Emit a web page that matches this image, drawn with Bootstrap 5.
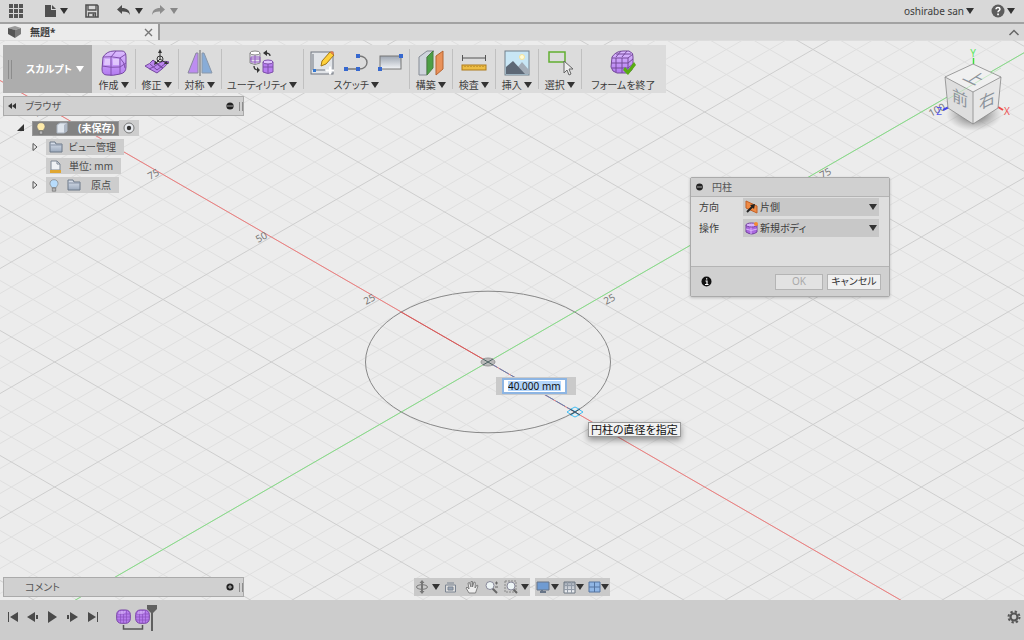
<!DOCTYPE html>
<html lang="ja">
<head>
<meta charset="utf-8">
<meta name="viewport" content="width=device-width, initial-scale=1">
<title>無題*</title>
<link href="https://cdn.jsdelivr.net/npm/bootstrap@5.3.0/dist/css/bootstrap.min.css" rel="stylesheet">
<style>
body{font-family:"Noto Sans","Noto Sans CJK JP",sans-serif;font-size:10px;line-height:14px;color:#3c3c3c;font-feature-settings:"palt";background:#ececec}
button,input,select{font-feature-settings:inherit}
svg{display:block;flex:none}
.bare{border:0;background:none;padding:0;color:inherit;display:flex;align-items:center}
.caret{width:0;height:0;border:4px solid transparent;border-top:6px solid #333;border-bottom:0;flex:none}
.caret.dim{border-top-color:#888}
.tight{gap:2px}
.appbar{height:24px;background:#d8d8d8;border-bottom:2px solid #a2a2a2;padding:0 9px 0 8px}
.filebtn{padding-left:4px}
.tabs{height:17px;background:#d8d8d8;border-bottom:1px solid #ddd}
.doc{width:160px;background:#ebebeb;border-right:2px solid #999;padding:0 5px 0 7px}
.stage{min-height:0;margin-top:-1px}
.tools{left:3px;top:5px;height:48px;background:#dcdcdc}
.space{width:89px;background:#adadad;color:#fff;font-weight:700;padding-left:5px}
.space span{margin:0 4px 0 14px}
.space .caret{border-top-color:#fff}
.grip{width:4px;height:19px;border:solid #8c8c8c;border-width:0 1px}
.grip.short{height:9px}
.tool{min-width:43px;padding:4px 6px 0;position:relative;flex-direction:column}
.tool+.tool::before{content:"";position:absolute;left:0;top:4px;bottom:4px;width:1px;background:#c0c0c0}
.tool .pics{height:29px}
.tool.finish{padding-left:10px;padding-right:10px}
.panel{left:3px;width:241px;height:20px;background:#d0d0d0;border:1px solid #aaa;padding:0 0 0 4px;color:#555}
.browse{top:56px}
.browse span{padding-left:8px}
.comments{bottom:3px}
.comments span{padding-left:17px}
.tree{left:0;top:80px}
.node{height:16px;margin-bottom:3px;padding-left:31px}
.node.root{padding-left:16px}
.node.leaf{padding-left:46px}
.node .box{background:#cdcdcd;height:16px;padding:0 8px 0 3px;color:#4a4a4a}
.node .sel{background:#828282;color:#fff;font-weight:700;height:15px;border:1px solid #999;padding-right:3px}
.node .part{margin:0 10px}
.node .pin{padding:0 4px}
.w-a{width:78px}.w-b{width:75px}.w-c{width:73px}
.dlg{right:134px;top:137px;width:200px;height:120px;background:#dedede;border:1px solid #aaa;border-radius:2px;box-shadow:0 1px 3px #0003}
.dlg .head{height:19px;background:#d0d0d0;border-bottom:1px solid #b4b4b4;padding-left:5px;gap:9px;color:#555}
.dlg .fields{padding-top:1px}
.dlg .foot{height:30px;background:#d0d0d0;border-top:1px solid #b4b4b4;padding:0 8px 0 10px}
.field{height:18px;margin-bottom:3px;padding:0 10px 0 8px}
.field label{width:44px}
.pick{background:#c8c8c8;padding:0 2px}
.pick select{appearance:none;border:0;background:none;color:inherit;font-size:10px;padding:0 0 0 2px;min-width:0}
.act{height:16px;border:1px solid #b4b4b4;background:#f0f0f0;color:#333;padding:0;font-size:10px;line-height:13px;width:54px}
.act:disabled{background:#e2e2e2;color:#aaa;width:48px}
.dim-in{left:calc(50% - 16px);top:calc(50% + 57px);width:80px;height:18px;background:#cacaca;padding:0 9px 0 6px}
.dim-in .ring{background:#fff;border:2px solid #8db5e3;padding:0 4px;height:16px}
.dim-in input{border:0;padding:0;width:100%;height:10px;font-size:10px;line-height:10px;background:#b2d5fb;color:#111;outline:0}
.tip{left:calc(50% + 76px);top:calc(50% + 102px);height:15px;border:1px solid #999;background:#f2f2f2;color:#111;font-size:11px;line-height:13px;padding:0 2px;box-shadow:0 3px 6px #0006;white-space:nowrap}
.cube{right:0;top:5px}
.navs{left:0;right:0;bottom:4px;gap:5px}
.navs>div{background:#c9c9c9;height:18px;padding:0 1px}
.time{height:40px;background:#ccc;padding:0 3px 6px 6px}
.steps{gap:6px}
.track{margin:4px 0 0 13px}
.axis{font-size:10px;fill:#777}
</style>
</head>
<body class="vh-100 d-flex flex-column overflow-hidden">
<svg width="0" height="0" class="position-absolute" aria-hidden="true">
<defs>
<linearGradient id="vi" x1="0" y1="0" x2="0" y2="1"><stop offset="0" stop-color="#dcbcff"/><stop offset="1" stop-color="#b27af0"/></linearGradient>
<linearGradient id="gr" x1="0" y1="0" x2="0" y2="1"><stop offset="0" stop-color="#9fa7b2"/><stop offset="1" stop-color="#f2f4f7"/></linearGradient>
<linearGradient id="fo" x1="0" y1="0" x2="0" y2="1"><stop offset="0" stop-color="#dde3ee"/><stop offset="1" stop-color="#9caabd"/></linearGradient>
<symbol id="folder" viewBox="0 0 14 12"><path d="M1 2V1h5l1 2h6v8H1z" fill="url(#fo)" stroke="#6c7888"/><path d="M1.500 4H13" stroke="#8793a5"/></symbol>
<symbol id="bulb" viewBox="0 0 10 13"><path d="M5 .7C2.500.7 1 2.400 1 4.400c0 1.500 1 2.300 1.800 4.200h4.400C8 6.700 9 5.900 9 4.400 9 2.400 7.500.7 5 .7z" stroke="#777" stroke-width=".6"/><path d="M3.300 9h3.400v3.200H3.300z" fill="#b5b5b5" stroke="#666" stroke-width=".6"/></symbol>
<symbol id="ball" viewBox="0 0 15 15"><rect x=".7" y="1" width="13.600" height="13.300" rx="4.500" fill="#b67ceb" stroke="#7740a6"/><path d="M1 5h13M1 8h13M1 11h13M4.500 1v13M7.500 1v13M10.500 1v13" stroke="#8b52bd" stroke-width=".7" fill="none"/><path d="M4 2h6L8 5H2z" fill="#e3c8ff" opacity=".5"/></symbol>
</defs>
</svg>

<header class="appbar d-flex align-items-center flex-shrink-0">
 <button class="bare" aria-label="データパネル"><svg width="16" height="14" fill="#555"><path d="M1 0h4v4H1zm5 0h4v4H6zm5 0h4v4h-4zM1 5h4v4H1zm5 0h4v4H6zm5 0h4v4h-4zM1 10h4v4H1zm5 0h4v4H6zm5 0h4v4h-4z"/></svg></button>
 <button class="bare filebtn gap-1 ms-3" aria-label="ファイル"><svg width="12" height="14" fill="#505050"><path d="M1 1h6v5h5v7H1z"/><path d="M8 1l4 4H8z"/></svg><i class="caret"></i></button>
 <button class="bare ms-3" aria-label="保存"><svg width="16" height="14" fill="none" stroke="#505050"><path d="M2 1h11l1 1v11H2z" stroke-width="1.600"/><path d="M4 1v5h8V1M4.500 13V9h7v4" stroke-width="1.300"/><path d="M9 10h1v2H9z" fill="#505050"/></svg></button>
 <button class="bare gap-1 ms-3" aria-label="元に戻す"><svg width="15" height="12"><path d="M1 4.500L6 0v3c5 0 7.500 2 8 7-1.500-2.700-3.500-3.500-8-3.400V9z" fill="#4d4d4d"/></svg><i class="caret"></i></button>
 <button class="bare gap-1 ms-2" aria-label="やり直し"><svg width="15" height="12"><path d="M14 4.500L9 0v3C4 3 1.500 5 1 10c1.500-2.700 3.500-3.500 8-3.400V9z" fill="#8e8e8e"/></svg><i class="caret dim"></i></button>
 <button class="bare tight ms-auto">oshirabe san <i class="caret"></i></button>
 <button class="bare tight ms-3" aria-label="ヘルプ"><svg width="15" height="14"><circle cx="8" cy="7" r="6.500" fill="#5c5c5c"/><path d="M6 5.300Q6.100 3.500 8 3.500t2 1.600Q10 6.200 8.900 6.700 8 7.200 8 8.200" stroke="#fff" stroke-width="1.500" fill="none"/><path d="M7.200 9.500h1.700v1.700H7.200z" fill="#fff"/></svg><i class="caret"></i></button>
</header>

<div class="tabs d-flex flex-shrink-0">
 <div class="doc d-flex align-items-center"><svg width="15" height="14"><path d="M1 3l7-2 6 2-6 2z" fill="#999"/><path d="M1 3l7 2v8l-7-4z" fill="#555"/><path d="M8 5l6-2v6l-6 4z" fill="#7a7a7a"/></svg><b class="ps-1 ms-1 me-auto">無題*</b><button class="bare" aria-label="閉じる"><svg width="9" height="9"><path d="M1 1l7 7M8 1L1 8" stroke="#777" stroke-width="1.400"/></svg></button></div>
 <button class="bare ms-auto me-1" aria-label="折りたたむ"><svg width="12" height="9"><path d="M1.500 7L6 2.500 10.500 7" fill="none" stroke="#666" stroke-width="1.500"/></svg></button>
</div>

<main class="stage position-relative flex-grow-1 overflow-hidden">
 <svg class="position-absolute top-0 start-0 w-100 h-100" aria-hidden="true"><svg x="50%" y="50%" overflow="visible"><g transform="translate(-24 42)" fill="none">
  <path id="minor" stroke="#dfdfdf"/><path id="major" stroke="#cecece"/>
  <path d="M-1560 -900L1560 900" stroke="#f07d7d"/><path d="M-1560 900L1560 -900" stroke="#86df86"/>
  <ellipse rx="122.500" ry="70.800" stroke="#888"/>
  <path d="M-87-50L0 0" stroke="#d45b5b"/><path d="M0 0l87 50" stroke="#5b83b5" stroke-dasharray="11 2"/>
  <ellipse rx="7" ry="4" fill="#b9b9b9" stroke="#999"/><path d="M-5-3L5 3M-5 3L5-3" stroke="#4d6262"/>
  <path d="M79 50l4-2.500M95 50l-4-2.500M79 50l4 2.500M95 50l-4 2.500M83 47l4-2 4 2-4 2.500zM83 53l4 2 4-2-4-2.500z" stroke="#43bdf2"/><path d="M82 47l10 6M82 53l10-6" stroke="#405363"/>
  <g class="axis"><text transform="translate(-122 -57) rotate(-28)">25</text><text transform="translate(-230 -119) rotate(-28)">50</text><text transform="translate(-338 -182) rotate(-28)">75</text><text transform="translate(-453 -244) rotate(-28)">100</text><text transform="translate(118 -57) rotate(-28)">25</text><text transform="translate(334 -183) rotate(-28)">75</text><text transform="translate(443 -245) rotate(-28)">100</text></g>
 </g></svg></svg>

 <div class="tools position-absolute d-flex">
  <button class="bare space"><i class="grip"></i><span>スカルプト</span><i class="caret"></i></button>
  <button class="bare tool"><span class="pics"><svg width="28" height="28"><path d="M3 8Q7 2 14 2h8q4 0 4 6v10q0 6-6 7-7 2-13 1-5 0-5-6z" fill="url(#vi)" stroke="#7548a0"/><path d="M3 8q8-1 17 1l6-4M20 9v16M11 8v19M2 17q9 2 18 1l6-4M11 8l5-6M20 9q5 5 5 10" fill="none" stroke="#8050ad"/><path d="M5 10h5v6H4zM13 10h6v6h-6z" fill="#ecdcff" opacity=".65"/></svg></span><span class="d-flex align-items-center tight">作成<i class="caret"></i></span></button>
  <button class="bare tool"><span class="pics"><svg width="28" height="28"><path d="M2 17q5-2 8-6l5 4q4-4 11-2-5 6-12 11Q8 21 2 17z" fill="#bb87ef" stroke="#75489f"/><path d="M6 20q5-2 9-5l5 4M10 11q3 4 9 8M7 15l7 6 9-7" fill="none" stroke="#75489f"/><path d="M17 10V3M17 10l-4 4M17 10l6 4" stroke="#333"/><circle cx="17" cy="10" r="3" fill="none" stroke="#333"/><path d="M15 4l2-4 2 4zM12 12l-1 4 4-2zM23 12l3 3h-5z" fill="#333"/></svg></span><span class="d-flex align-items-center tight">修正<i class="caret"></i></span></button>
  <button class="bare tool"><span class="pics"><svg width="28" height="28"><path d="M12 4v20H2L10 4z" fill="#bd8df1" stroke="#8a8a9d"/><path d="M16 4v20h10L18 4z" fill="#88acd7" stroke="#8a98aa"/><path d="M14 1v26" stroke="#666"/></svg></span><span class="d-flex align-items-center tight">対称<i class="caret"></i></span></button>
  <button class="bare tool"><span class="pics"><svg width="28" height="28"><path d="M2 4v10q5 3 10 0V4z" fill="#e3e3eb" stroke="#888"/><path d="M3 8h9v5H3zM7 5v10M2 10h10" fill="none" stroke="#935bc3"/><ellipse cx="7" cy="4" rx="5" ry="2" fill="#fff" stroke="#888"/><path d="M15 13v10q5 3 10 0V13z" fill="#b77df0" stroke="#7d50a8"/><path d="M20 15v9M15 18h10" stroke="#7d50a8"/><ellipse cx="20" cy="13" rx="5" ry="2" fill="#e1c5ff" stroke="#7d50a8"/><path d="M22 7q0-3-5-3M6 17q0 4 4 4" fill="none" stroke="#333" stroke-width="1.300"/><path d="M15 4l4-3v6zM12 21l-3-3v6z" fill="#333"/></svg></span><span class="d-flex align-items-center tight">ユーティリティ<i class="caret"></i></span></button>
  <button class="bare tool"><span class="pics d-flex gap-2"><svg width="26" height="28"><rect x="2" y="3" width="22" height="22" fill="#e1e4e8" stroke="#707780"/><path d="M4 5v16h12" fill="none" stroke="#707780"/><path d="M13 12L21 3l4 3-8 9-5 2z" fill="#ffd13b" stroke="#a07619"/><path d="M21 3l2-1 2 2-1 2z" fill="#e27e4c"/><path d="M17 21.500h8M21 17.500v8" stroke="#fff" stroke-width="2"/><path d="M4 20h3v3H4z" fill="#3478d2"/></svg><svg width="26" height="28"><path d="M3 20h12c12 1 12-14 0-13" fill="none" stroke="#777" stroke-width="1.400"/><path d="M1 18h4v4H1zm12 0h4v4h-4zM13 5h4v4h-4z" fill="#3668cf"/></svg><svg width="26" height="28"><rect x="3" y="7" width="21" height="13" fill="url(#gr)" stroke="#777"/><path d="M22 5h4v4h-4zM1 18h4v4H1z" fill="#3668cf"/></svg></span><span class="d-flex align-items-center tight">スケッチ<i class="caret"></i></span></button>
  <button class="bare tool"><span class="pics"><svg width="28" height="28"><path d="M2 8l8-6h7L10 8v18H2z" fill="#cfd4dc" stroke="#858b94"/><path d="M10 8l6-6v17l-6 7z" fill="#4c9f45" stroke="#487e41"/><path d="M19 7l7-5v18l-7 6z" fill="#e99159" stroke="#b66432"/></svg></span><span class="d-flex align-items-center tight">構築<i class="caret"></i></span></button>
  <button class="bare tool"><span class="pics"><svg width="28" height="28"><path d="M2.500 6v6M25.500 6v6M3 9h22" stroke="#555"/><rect x="2" y="16" width="24" height="5" fill="#edbd45" stroke="#ad7b1d"/><path d="M5 17v1m3-1v1m3-1v1m3-1v1m3-1v1m3-1v1m3-1v1" stroke="#a67b20"/></svg></span><span class="d-flex align-items-center tight">検査<i class="caret"></i></span></button>
  <button class="bare tool"><span class="pics"><svg width="28" height="28"><rect x="2" y="2" width="24" height="24" fill="#c8e6f5" stroke="#72808b"/><circle cx="19" cy="8" r="2.500" fill="#fffbd7" stroke="#f4e39c"/><path d="M10 24l9-11 7 8v4H10z" fill="#a3adb8"/><path d="M3 18l7-6 12 13H3z" fill="#5d6876"/></svg></span><span class="d-flex align-items-center tight">挿入<i class="caret"></i></span></button>
  <button class="bare tool"><span class="pics"><svg width="28" height="28"><rect x="3" y="3" width="16" height="10" fill="none" stroke="#61ae31" stroke-width="1.500"/><path d="M18 12v12l3-3 2 5 2-1-2-5h4z" fill="#eee" stroke="#666"/></svg></span><span class="d-flex align-items-center tight">選択<i class="caret"></i></span></button>
  <button class="bare tool finish"><span class="pics"><svg width="28" height="28"><path d="M3 8Q7 2 14 2h6q5 2 4 6v10q0 4-6 6H8q-5-1-6-6z" fill="url(#vi)" stroke="#744a99"/><path d="M3 9h16l5-4M2 14h17l5-4M3 19h16l5-4M7 5h15M7 9v14M13 9v15M19 9v14M7 8l5-6M13 8l5-6" fill="none" stroke="#744a99"/><path d="M14 21l2-3 3 3 6-8 2 3-8 10z" fill="#58ac13"/></svg></span><span>フォームを終了</span></button>
 </div>

 <div class="panel browse position-absolute d-flex align-items-center"><svg width="9" height="8"><path d="M4 1v6L0 4zM8 1v6L4 4z" fill="#333"/></svg><span class="me-auto">ブラウザ</span><svg width="10" height="10"><circle cx="5" cy="5" r="3.600" fill="#222"/><path d="M2 5h6" stroke="#aaa"/></svg><i class="grip short ms-1"></i></div>
 <div class="tree position-absolute">
  <div class="node root d-flex align-items-center"><svg width="16" height="10"><path d="M8 1v7H1z" fill="#333"/></svg><div class="box sel d-flex align-items-center"><svg width="10" height="13" fill="#ffebaa"><use href="#bulb"/></svg><svg class="part" width="12" height="12"><path d="M1 3l3-2h7v8l-3 2H1z" fill="#dfe5ed" stroke="#aab3bf"/><path d="M8 3v8l3-2V1z" fill="#aeb7c4"/></svg><span>(未保存)</span></div><label class="box pin d-flex align-items-center"><svg width="12" height="12"><circle cx="6" cy="6" r="5" fill="#e7eaee" stroke="#777"/><circle cx="6" cy="6" r="2.200" fill="#333"/></svg><input type="radio" checked class="visually-hidden" aria-label="アクティブ"></label></div>
  <div class="node d-flex align-items-center"><svg width="15" height="10"><path d="M2 1.500v7L6 5z" fill="none" stroke="#555"/></svg><div class="box w-a d-flex align-items-center"><svg width="14" height="12" class="me-auto"><use href="#folder"/></svg>ビュー管理</div></div>
  <div class="node leaf d-flex align-items-center"><div class="box w-b d-flex align-items-center"><svg width="13" height="13" class="me-auto"><path d="M2 1h6l3 3v6H2z" fill="#eef1f5" stroke="#7c8795"/><path d="M8 1v3h3" fill="none" stroke="#7c8795"/><path d="M1 10h11v3H1z" fill="#e0a630"/></svg>単位: mm</div></div>
  <div class="node d-flex align-items-center"><svg width="15" height="10"><path d="M2 1.500v7L6 5z" fill="none" stroke="#555"/></svg><div class="box w-c d-flex align-items-center"><svg width="10" height="13" fill="#b8dcfb"><use href="#bulb"/></svg><svg width="14" height="12" class="ms-2 me-auto"><use href="#folder"/></svg>原点</div></div>
 </div>

 <svg class="cube position-absolute" width="90" height="90" viewBox="934 45 90 90">
  <defs><radialGradient id="sh"><stop offset=".2" stop-color="#777"/><stop offset="1" stop-color="#999" stop-opacity="0"/></radialGradient></defs>
  <ellipse cx="974" cy="114" rx="28" ry="17" fill="url(#sh)"/>
  <path d="M973.500 64v-6" stroke="#3fe13f" stroke-width="1.500"/><path d="M949 107l-6 3" stroke="#4343e8" stroke-width="2"/><path d="M998 107l5 3" stroke="#f04848" stroke-width="2"/>
  <path d="M945 77l28-13 28 13-28 15z" fill="#f0f0f0"/><path d="M945 77l28 15v32l-25-16z" fill="#dedede"/><path d="M973 92l28-15-3 31-25 16z" fill="#e7e7e7"/>
  <path d="M945 77l28-13 28 13-28 15zM945 77l3 31 25 16 25-16 3-31M973 92v32" fill="none" stroke="#888" stroke-width=".8"/>
  <path d="M948 99L1001 68" stroke="#8de08d" opacity=".4"/>
  <g fill="#8c939b" font-size="16" text-anchor="middle"><text transform="translate(969 82) rotate(26) skewX(-30)">上</text><text transform="translate(960 104) skewY(26)">前</text><text transform="translate(987 106) skewY(-26)">右</text></g>
  <g font-size="10" text-anchor="middle"><text x="973" y="57" fill="#5fe85f">Y</text><text x="939" y="115" fill="#5656f0">Z</text><text x="1007" y="115" fill="#f05656">X</text></g>
 </svg>

 <form class="dlg position-absolute d-flex flex-column" onsubmit="return false">
  <div class="head d-flex align-items-center"><svg width="7" height="8"><circle cx="3.500" cy="4" r="3.400" fill="#222"/><path d="M1 4h5" stroke="#aaa"/></svg><span>円柱</span></div>
  <div class="fields flex-grow-1">
   <div class="field d-flex align-items-center"><label for="dir">方向</label><div class="pick d-flex align-items-center flex-grow-1 h-100"><svg width="13" height="14"><path d="M1 1l11 5v7L1 8z" fill="#f08b45" stroke="#c26026"/><path d="M2 12l6-6" stroke="#222" stroke-width="2"/><path d="M10 4L5 5l4 4z" fill="#222"/></svg><select id="dir" class="flex-grow-1"><option>片側</option></select><i class="caret"></i></div></div>
   <div class="field d-flex align-items-center"><label for="op">操作</label><div class="pick d-flex align-items-center flex-grow-1 h-100"><svg width="13" height="14"><path d="M1 4v7q6 4 11 0V4z" fill="#aa68e0" stroke="#74429f"/><path d="M1 8q5 3 11 0M6 5v8" stroke="#d9b3fc" fill="none"/><ellipse cx="6.500" cy="4" rx="5.500" ry="2" fill="#d9b3fc" stroke="#74429f"/><circle cx="11" cy="3" r="2" fill="#f58b30"/></svg><select id="op" class="flex-grow-1"><option>新規ボディ</option></select><i class="caret"></i></div></div>
  </div>
  <div class="foot d-flex align-items-center"><svg width="11" height="11"><circle cx="5.500" cy="5.500" r="5" fill="#111"/><path d="M4.500 5h1.500v3.500M4 8.500h3.500M5 2.800h1.300" stroke="#fff" stroke-width="1.200" fill="none"/></svg><button class="act ms-auto me-1" disabled>OK</button><button class="act" type="button">キャンセル</button></div>
 </form>

 <div class="dim-in position-absolute d-flex align-items-center"><div class="ring d-flex align-items-center flex-grow-1"><input aria-label="直径" value="40.000 mm"></div></div>
 <div class="tip position-absolute" role="tooltip">円柱の直径を指定</div>

 <div class="panel comments position-absolute d-flex align-items-center"><span class="me-auto">コメント</span><svg width="10" height="10"><circle cx="5" cy="5" r="3.600" fill="#222"/><path d="M3 5h4M5 3v4" stroke="#bbb"/></svg><i class="grip short ms-1"></i></div>

 <div class="navs position-absolute d-flex justify-content-center">
  <div class="d-flex align-items-center">
   <button class="bare tight" aria-label="オービット"><svg width="15" height="14"><ellipse cx="7" cy="7" rx="5.500" ry="2.300" fill="none" stroke="#777"/><path d="M7 2v10" stroke="#777" stroke-width="2"/><path d="M4.500 3L7 0l2.500 3zM4.500 11L7 14l2.500-3z" fill="#777"/></svg><i class="caret"></i></button>
   <button class="bare ms-1" aria-label="ビュー正面"><svg width="13" height="12"><path d="M1.500 4h10v7h-10z" fill="#ddd" stroke="#7b8491"/><path d="M3 2h7M4 6h5v3H4z" fill="#9aa5b5" stroke="#7b8491"/></svg></button>
   <button class="bare ms-2" aria-label="画面移動"><svg width="14" height="14"><path d="M4 13L1 8l1-1 2 2-1-6 1.500-.5L6 7V1.500h1.500V7L9 2l1.300.5L10 8l2-3 1 .7L10.500 13z" fill="#eee" stroke="#777" stroke-width=".9"/></svg></button>
   <button class="bare ms-1" aria-label="ズーム"><svg width="17" height="14"><path d="M9 8l5 5" stroke="#666" stroke-width="2"/><circle cx="7" cy="5.500" r="4" fill="#edf4f5" stroke="#889"/><path d="M12 3h3M13.500 1.500v3M12 7h3" stroke="#666"/></svg></button>
   <button class="bare tight ms-1" aria-label="フィット"><svg width="15" height="14"><path d="M1 1h11v11H1z" fill="none" stroke="#888" stroke-dasharray="2 1"/><path d="M9 9l4 4" stroke="#666" stroke-width="2"/><circle cx="7" cy="6" r="4" fill="#edf4f5" stroke="#889"/></svg><i class="caret"></i></button>
  </div>
  <div class="d-flex align-items-center">
   <button class="bare" aria-label="表示設定"><svg width="15" height="14"><path d="M1 2h12v8H1z" fill="#6f9bd2" stroke="#687587"/><path d="M6 10v2H4h6" fill="none" stroke="#687587" stroke-width="2"/></svg><i class="caret"></i></button>
   <button class="bare ms-1" aria-label="グリッド"><svg width="13" height="14"><path d="M1 2h11v11H1z" fill="url(#gr)" stroke="#6d7681"/><path d="M4.500 2v11M8.500 2v11M1 5.500h11M1 9.500h11" stroke="#929ba7"/></svg><i class="caret"></i></button>
   <button class="bare ms-1" aria-label="ビューポート"><svg width="13" height="14"><path d="M1 2h11v10H1z" fill="#90b6e5" stroke="#5475a1"/><path d="M6.500 2v10M1 7h11" stroke="#5475a1"/></svg><i class="caret"></i></button>
  </div>
 </div>
</main>

<footer class="time d-flex align-items-center flex-shrink-0">
 <div class="steps d-flex">
 <button class="bare" aria-label="先頭へ"><svg width="14" height="14" fill="#4a4a4a"><path d="M2 2h1v10H2zM12 2v10L4 7z"/></svg></button>
 <button class="bare" aria-label="前へ"><svg width="14" height="14" fill="#4a4a4a"><path d="M9 2v10L1 7zM10 5h2v4h-2z"/></svg></button>
 <button class="bare" aria-label="再生"><svg width="14" height="14" fill="#4a4a4a"><path d="M2 1l9 6-9 6z"/></svg></button>
 <button class="bare" aria-label="次へ"><svg width="14" height="14" fill="#4a4a4a"><path d="M4 2v10l8-5zM1 5h2v4H1z"/></svg></button>
 <button class="bare" aria-label="末尾へ"><svg width="14" height="14" fill="#4a4a4a"><path d="M2 2v10l8-5zM11 2h1v10h-1z"/></svg></button>
 </div>
 <svg class="track" width="46" height="28"><use href="#ball" x="3" y="4" width="15" height="15"/><use href="#ball" x="22" y="4" width="15" height="15"/><path d="M10.500 20v4h19v-4" fill="none" stroke="#555" stroke-width="1.500"/><path d="M34 0h10v4l-4 4v18h-2V8l-4-4z" fill="#606060"/></svg>
 <button class="bare ms-auto" aria-label="設定"><svg width="14" height="14"><circle cx="7" cy="7" r="5.500" fill="none" stroke="#555" stroke-width="2" stroke-dasharray="2.300 2.020"/><circle cx="7" cy="7" r="3.500" fill="none" stroke="#555" stroke-width="2.200"/></svg></button>
</footer>
<script src="https://cdn.jsdelivr.net/npm/bootstrap@5.3.0/dist/js/bootstrap.bundle.min.js"></script>
<script>
// Isometric ground grid: every fifth line is a major one.
const lines={minor:'',major:''};
for(let k=-70;k<=70;k++){
  const y=k*25,kind=k%5?'minor':'major';
  lines[kind]+=`M-1560 ${y-900}L1560 ${y+900}M-1560 ${y+900}L1560 ${y-900}`;
}
for(const id in lines)document.getElementById(id).setAttribute('d',lines[id]);
</script>
</body>
</html>
